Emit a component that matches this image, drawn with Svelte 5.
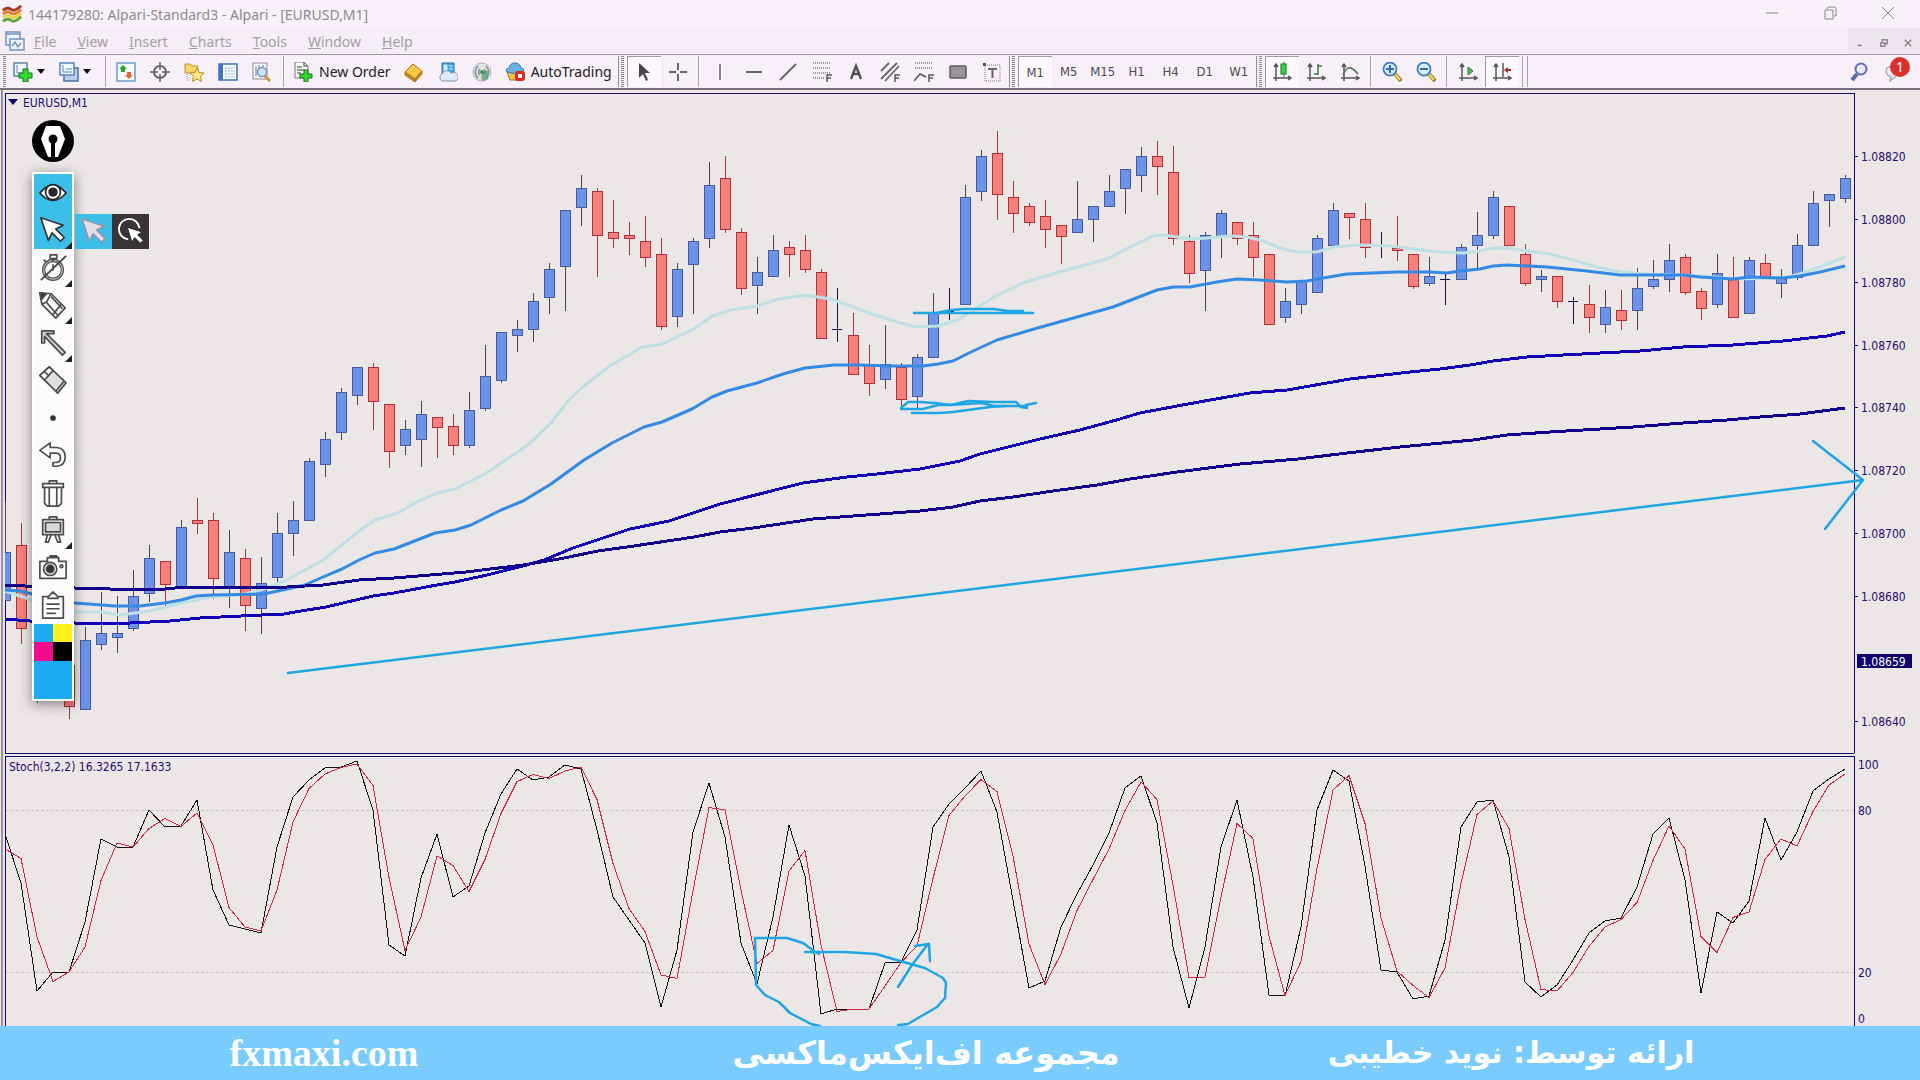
<script>
    const menus = ['File', 'View', 'Insert', 'Charts', 'Tools', 'Window', 'Help'];
    const mainTools = ['market', 'target', 'folder', 'navigator', 'tester'];
    const lineTools = ['vline', 'hline', 'trend', 'fibo', 'label', 'channel', 'fan', 'rect', 'textbox'];
    const frames = ['M1', 'M5', 'M15', 'H1', 'H4', 'D1', 'W1'];
    const penTools = ['eye', 'pointer', 'timer', 'pencil', 'line', 'eraser', 'dot', 'undo', 'trash', 'board', 'camera', 'clipboard'];
    const withMenu = ['pointer', 'timer', 'pencil', 'line', 'board'];

    // distance between bars and the first bar
    const STEP = 16;
    const FIRST = 5;
    const barX = (i) => FIRST + i * STEP;

    // bars: type (u - up, d - down, n - doji), high, body top, body bottom, low
    const bars = `
        u 501 552 600 600|d 523 545 628 644|u 640 660 700 703|d 650 670 690 700|d 660 665 706 719|u 627 640 709 709
        u 592 633 644 650|u 596 633 637 653|u 570 596 628 631|u 545 558 593 602|d 561 561 584 606|u 520 527 587 587
        d 498 520 523 534|d 513 520 578 599|u 530 552 588 608|d 549 558 605 631|u 557 583 608 634|u 513 533 577 583
        u 501 520 533 556|u 458 461 520 520|u 432 439 464 477|u 388 392 432 440|u 367 367 395 405|d 363 367 401 430
        d 404 404 451 468|u 420 429 445 455|u 401 414 439 467|d 417 417 427 458|d 414 426 445 455|u 392 410 445 448
        u 345 376 408 411|u 332 332 380 383|u 320 329 335 352|u 293 301 329 342|u 263 269 297 314|u 210 210 266 311
        u 175 188 207 226|d 188 191 235 277|d 200 232 238 248|d 222 235 238 255|d 216 241 257 267|d 238 254 326 330
        u 263 269 316 327|u 238 241 264 314|u 162 185 238 248|d 156 178 229 233|d 228 232 288 295|u 257 272 285 314
        u 235 250 276 276|d 241 247 254 277|d 235 250 269 273|d 269 272 338 338|n 288 329 329 342|d 313 335 374 374
        d 345 364 383 396|u 325 364 379 389|d 363 367 399 409|u 354 357 396 408|u 293 313 357 357|n 288 311 311 320
        u 185 197 304 304|u 150 156 191 201|d 131 153 194 220|d 181 197 213 233|d 203 206 222 226|d 200 216 229 248
        d 225 225 236 264|u 181 219 232 232|u 206 206 219 242|u 175 191 206 206|u 169 169 188 214|u 147 156 175 192
        d 141 156 166 195|d 146 172 238 245|d 235 241 273 283|u 232 235 270 311|u 210 213 236 258|d 222 222 238 245
        d 222 235 257 277|d 254 254 324 324|u 288 301 317 323|u 280 280 304 314|u 235 238 292 292|u 203 210 245 245
        d 213 213 217 239|d 203 219 247 258|n 232 245 245 258|d 216 248 250 261|d 254 254 286 289|u 257 276 283 286
        n 273 279 279 305|u 244 247 279 279|u 212 235 245 268|u 191 197 235 239|d 206 206 245 246|d 244 254 283 286
        u 270 276 279 292|d 276 276 301 308|n 297 301 301 324|d 285 304 317 333|u 290 307 324 333|d 290 310 320 330
        u 268 288 310 330|u 260 279 286 289|u 244 260 279 292|d 254 257 292 295|d 288 291 308 320|u 254 273 304 308
        d 257 280 317 317|u 257 260 313 313|d 254 263 277 277|u 269 279 283 298|u 234 245 277 280|u 191 203 245 245
        u 194 194 200 227|u 175 178 198 203`
        .trim()
        .split(/[|\n]/)
        .map((row, i) => {
            const [type, ...nums] = row.trim().split(' ');
            const [high, top, bottom, low] = nums.map(Number);
            return { type, high, top, bottom, low, x: barX(i) };
        });

    // moving averages, fast to slow
    const averages = [
        { cls: 'ma-fast', points: '5,591 32,600 75,612 101,612 120,615 150,611 181,603 212,597 245,594 264,589 287,580 323,560 342,545 359,531 375,520 398,513 417,502 437,493 455,489 485,474 507,459 528,445 551,423 569,400 584,386 610,366 642,347 662,344 694,329 712,316 731,310 757,306 779,299 805,295 831,299 853,307 875,315 901,323 916,327 938,326 957,320 971,312 994,297 1023,283 1056,273 1107,259 1130,247 1153,236 1163,235 1177,237 1190,239 1207,238 1230,236 1247,237 1263,241 1280,248 1297,252 1317,252 1333,247 1360,245 1390,246 1413,249 1440,252 1463,253 1480,251 1493,248 1510,248 1527,251 1550,254 1573,260 1597,267 1620,272 1647,274 1683,275 1713,277 1733,279 1783,278 1800,274 1820,267 1845,257' },
        { cls: 'ma-mid', points: '5,590 20,591 32,594 75,603 115,606 140,606 165,603 181,600 196,596 212,595 264,594 287,589 305,585 323,577 342,569 359,560 375,553 394,549 435,533 455,530 471,525 501,510 523,501 551,484 584,460 612,443 644,427 662,422 692,409 712,397 727,391 757,383 783,374 805,368 834,365 860,365 890,366 923,366 938,364 953,361 971,352 997,340 1034,329 1077,317 1113,307 1157,290 1173,287 1190,287 1217,282 1237,279 1260,280 1287,282 1307,281 1323,278 1347,274 1397,272 1430,272 1447,273 1460,271 1480,269 1493,266 1507,265 1547,267 1587,271 1620,275 1683,275 1700,277 1733,279 1750,277 1783,278 1800,276 1820,272 1845,266' },
        { cls: 'ma-slow', points: '5,619 30,621 75,623 130,623 170,621 200,618 262,615 284,614 301,611 326,607 373,596 394,593 437,585 455,582 487,575 523,566 544,560 573,548 630,529 669,521 720,504 803,483 847,477 877,474 920,469 960,461 980,454 1040,439 1080,430 1120,419 1140,413 1177,406 1210,400 1250,393 1287,390 1350,379 1410,372 1440,369 1470,365 1493,361 1527,357 1600,353 1640,351 1683,347 1733,345 1783,341 1827,336 1845,332' },
        { cls: 'ma-base', points: '5,585 25,586 75,588 110,589 165,589 185,587 287,587 323,585 359,580 394,578 466,572 523,565 559,559 598,551 634,546 694,537 720,532 753,528 813,519 853,516 920,511 953,507 980,501 1013,497 1053,491 1097,485 1130,479 1177,472 1240,464 1298,459 1347,453 1400,447 1473,440 1507,435 1550,432 1633,427 1683,423 1727,420 1760,417 1800,414 1845,408' },
    ];

    // stochastic %K, y on the canvas
    const fastLine = [
        834, 883, 991, 972, 972, 922, 839, 847, 847, 810, 827, 826, 800, 890, 925, 929, 933, 847, 797, 780,
        768, 767, 761, 810, 945, 956, 878, 834, 897, 886, 833, 794, 769, 780, 777, 765, 769, 830, 897, 920,
        943, 1007, 950, 832, 783, 837, 943, 984, 917, 825, 876, 1014, 1009, 1009, 1009, 963, 962, 930, 827, 804,
        788, 771, 812, 900, 988, 981, 927, 894, 865, 833, 788, 776, 823, 947, 1008, 947, 847, 800, 877, 995,
        996, 927, 810, 770, 781, 866, 970, 972, 999, 996, 940, 827, 802, 800, 857, 982, 997, 985, 960, 933,
        921, 918, 887, 834, 818, 880, 993, 912, 923, 901, 818, 860, 832, 791, 779, 769,
    ];
    // %D is the mean of the last two %K values
    const slowLine = fastLine.map((y, i) => (i ? (y + fastLine[i - 1]) / 2 : 849));
    const toPoints = (line) => line.map((y, i) => `${barX(i)},${y}`).join(' ');

    const prices = [
        ['1.08820', 156], ['1.08800', 219], ['1.08780', 282], ['1.08760', 345], ['1.08740', 407],
        ['1.08720', 470], ['1.08700', 533], ['1.08680', 596], ['1.08640', 721],
    ];
    const levels = [['100', 764], ['80', 810], ['20', 972], ['0', 1018]];

    // hand drawn marks
    const strokes = [
        'M288 673L1863 480M1813 441L1863 480L1825 529',
        'M914 313H1033M936 313L951 310L964 309L994 309L1008 311H1023',
        'M901 408L908 402H920L934 403L951 405L968 401L994 402H1016L1021 407L1027 408L1026 405L1036 403',
        'M901 409H923L938 405L949 405L982 403L994 406H1026',
        'M912 413H940L953 412L990 407L1005 406',
        'M819 954L814 951L803 943L787 938H755L756 985L765 995L779 1002L790 1013L811 1024L820 1026',
        'M805 952H845L876 954L900 961L925 968L943 978L946 983L945 998L937 1007L918 1018L908 1024L898 1025',
        'M898 987L912 965L928 944M915 946L929 944L930 961',
    ];
</script>

{#snippet axes()}
    <path d="M4 3v16M1 16h18M2 5l2-3 2 3M16 14l3 2-3 2" fill="none" stroke="#555" stroke-width="1.500" />
{/snippet}

{#snippet icon(name)}
    <svg class="icon" viewBox="0 0 20 20" aria-hidden="true">
        {#if name === 'newchart'}
            <rect x="1" y="1" width="13" height="13" fill="#eef6ff" stroke="#5d84a8" stroke-width="1.5" />
            <path d="M4 3v8h8" fill="none" stroke="#6b8cae" />
            <path d="M10 7h5v4h4v5h-4v4h-5v-4H6v-5h4z" fill="#35d52f" stroke="#13771a" />
        {:else if name === 'profiles'}
            <path d="M5 13v6h14V6h-4" fill="#b9cdec" stroke="#496fa5" stroke-width="1.5" />
            <rect x="1" y="1" width="14" height="12" fill="#f1f7ff" stroke="#5a85bd" stroke-width="1.5" />
            <path d="M4 3v7h9M7 7h6" fill="none" stroke="#5a85bd" />
        {:else if name === 'market'}
            <rect x="1" y="1" width="18" height="18" fill="#f5fbff" stroke="#6a9ccc" stroke-width="1.5" />
            <path d="M7 3l4 4H9v3H5V7H3z" fill="#2fa52f" />
            <path d="M13 17l-4-4h2v-3h4v3h2z" fill="#e2683c" />
        {:else if name === 'target'}
            <circle cx="10" cy="10" r="6" fill="none" stroke="#666" stroke-width="2" />
            <path d="M10 0v8M10 12v8M0 10h8M12 10h8" stroke="#666" stroke-width="1.5" />
        {:else if name === 'folder'}
            <path d="M1 2h5l2 2h6v7H1z" fill="#f6d76c" stroke="#bb9635" />
            <path d="M3 12v6h4" fill="none" stroke="#888" stroke-dasharray="1 1" />
            <path d="M13 6l2 4.500 5 .5-3.500 3.500 1 5-4.500-2.500-4.500 2.500 1-5L6 11l5-.5z" fill="#ffe680" stroke="#b78a26" />
        {:else if name === 'navigator'}
            <rect x="1" y="2" width="18" height="16" fill="#fff" stroke="#3c72b9" stroke-width="1.500" />
            <path d="M1 2h4v16H1z" fill="#4377c1" />
            <path d="M7 6h10M7 9h10M7 12h10M7 15h10" stroke="#8eabd4" stroke-dasharray="2 1" />
        {:else if name === 'tester'}
            <rect x="1" y="1" width="14" height="16" fill="#f7f7fb" stroke="#8a8a99" />
            <path d="M4 4v10M7 3v6M11 3v5" stroke="#5d7fa0" />
            <path d="M13 14l5 5" stroke="#c9a13b" stroke-width="3" />
            <circle cx="10" cy="10" r="4.500" fill="#cfe6fa" stroke="#7793ad" stroke-width="1.500" />
        {:else if name === 'order'}
            <path d="M2 0h9l4 4v12H2z" fill="#f8f8f8" stroke="#777" />
            <path d="M11 0v4h4M4 5h5M4 8h8M4 11h4" fill="none" stroke="#777" stroke-width="1.500" />
            <path d="M11 8h4v4h4v4h-4v4h-4v-4H7v-4h4z" fill="#35d52f" stroke="#13771a" />
        {:else if name === 'gold'}
            <path d="M1 10L9 2l9 7-7 8z" fill="#f4c64a" stroke="#a97416" />
            <path d="M1 10l10 7v3L1 13zM11 17l7-8v3l-7 8z" fill="#c58b20" stroke="#a97416" />
        {:else if name === 'cloud'}
            <path d="M4 1h12v12H4z" fill="#3fa6e2" stroke="#2774b1" />
            <path d="M6 3h3v8H6zM11 4h4M11 7h4" fill="#c9ecff" stroke="#c9ecff" />
            <path d="M4 19a4 4 0 0 1 0-7 5 5 0 0 1 9-1 4 4 0 0 1 5 8z" fill="#dfe9f5" stroke="#7c92b2" />
        {:else if name === 'radio'}
            <circle cx="10" cy="10" r="9" fill="#e0e3e2" stroke="#acb2b1" />
            <path d="M6 4a8 8 0 0 0 0 12M14 4a8 8 0 0 1 0 12M8 7a4 4 0 0 0 0 6M12 7a4 4 0 0 1 0 6" fill="none" stroke="#7c8b88" stroke-width="1.500" />
            <path d="M10 9v3a6 6 0 0 0 1 7l5-2V9z" fill="#4d9d69" opacity=".7" />
            <circle cx="10" cy="10" r="2" fill="#3b9357" />
        {:else if name === 'auto'}
            <path d="M2 10h15l-3 8H5z" fill="#edc04a" stroke="#a27722" />
            <path d="M1 9q0-3 3-3 1-5 6-5t6 5q3 0 3 3-9 5-18 0z" fill="#68b1e3" stroke="#3a7bad" />
            <rect x="10" y="9" width="10" height="10" rx="3" fill="#e02a1d" />
            <rect x="13" y="12" width="4" height="4" fill="#fff" />
        {:else if name === 'cursor'}
            <path d="M5 1v15l4-4 3 7 2-1-3-7h5z" fill="#484448" />
        {:else if name === 'cross'}
            <path d="M10 1v7M10 12v7M1 10h7M12 10h7" stroke="#666" stroke-width="2" />
        {:else if name === 'vline'}
            <path d="M10 2v16" stroke="#666" stroke-width="1.500" />
        {:else if name === 'hline'}
            <path d="M2 10h16" stroke="#666" stroke-width="2" />
        {:else if name === 'trend'}
            <path d="M2 18L18 2" stroke="#666" stroke-width="2" />
        {:else if name === 'fibo'}
            <path d="M1 1h18M1 6h18M1 11h18M1 16h11" stroke="#777" stroke-width="1.500" stroke-dasharray="1 1" />
            <path d="M15 20v-7h5M15 16h4" fill="none" stroke="#555" stroke-width="1.500" />
        {:else if name === 'label'}
            <path d="M5 17l5-13 5 13M7 12h6" fill="none" stroke="#555" stroke-width="2.500" />
        {:else if name === 'channel'}
            <path d="M1 9l8-8M1 17L17 1M5 19L19 4" stroke="#666" stroke-width="1.800" />
            <path d="M15 20v-7h5M15 16h4" fill="none" stroke="#555" stroke-width="1.500" />
        {:else if name === 'fan'}
            <path d="M1 1h18M1 6h18" stroke="#777" stroke-width="1.500" stroke-dasharray="1 1" />
            <path d="M0 19l6-7 6 3M15 20v-7h5M15 16h4" fill="none" stroke="#555" stroke-width="1.500" />
        {:else if name === 'rect'}
            <rect x="2" y="4" width="16" height="12" rx="1" fill="#999498" stroke="#5d595d" stroke-width="1.500" />
        {:else if name === 'textbox'}
            <rect x="3" y="3" width="15" height="16" fill="none" stroke="#777" stroke-dasharray="1 1" />
            <path d="M1 1h3v3H1z" fill="#555" />
            <path d="M6 7h9M10.500 7v9" stroke="#666" stroke-width="2" />
        {:else if name === 'candles'}
            {@render axes()}
            <path d="M12 0v15" stroke="#147a1d" />
            <rect x="9" y="2" width="5" height="10" fill="#35d548" stroke="#147a1d" />
        {:else if name === 'barchart'}
            {@render axes()}
            <path d="M12 2v11M12 4h4M8 12h4" stroke="#3b7a41" stroke-width="1.500" />
        {:else if name === 'linechart'}
            {@render axes()}
            <path d="M3 13q4-9 8-7t7 6" fill="none" stroke="#557058" stroke-width="1.500" />
        {:else if name === 'zoomin' || name === 'zoomout'}
            <path d="M13 12l6 7" stroke="#8d7420" stroke-width="4" />
            <path d="M13 12l5 6" stroke="#f2d65c" stroke-width="2.500" />
            <circle cx="8" cy="7" r="6.500" fill="#d8eeff" stroke="#447bc5" stroke-width="1.800" />
            <path d={name === 'zoomin' ? 'M4 7h8M8 3v8' : 'M4 7h8'} stroke="#336cae" stroke-width="2" />
        {:else if name === 'scroll'}
            {@render axes()}
            <path d="M10 5l5 4-5 4z" fill="#45bc57" stroke="#2a7b38" />
        {:else if name === 'shift'}
            {@render axes()}
            <path d="M11 1v14" stroke="#555" stroke-width="1.500" />
            <path d="M12 8l4-3v2h3v2h-3v2z" fill="#ae2727" />
        {:else if name === 'search'}
            <path d="M7 12l-5 6" stroke="#5c6ba8" stroke-width="4" />
            <circle cx="11" cy="7" r="5.500" fill="#e8ebfa" stroke="#6070b4" stroke-width="2" />
        {:else if name === 'chat'}
            <path d="M3 6a6 6 0 1 1 8 9l-5 4 1-4a6 6 0 0 1-4-9z" fill="#f0edf1" stroke="#b1abb4" stroke-width="1.500" />
        {/if}
    </svg>
{/snippet}

{#snippet pen(name)}
    <svg class="pen-icon" viewBox="0 0 32 32" aria-hidden="true" fill="none" stroke="#4e4b4f" stroke-width="1.800" stroke-linejoin="round">
        {#if name === 'eye'}
            <path d="M2 16q14-17 28 0-14 16-28 0z" fill="#fff" stroke="#28282c" />
            <circle cx="16" cy="15" r="8" fill="#fff" stroke="#28282c" />
            <circle cx="16" cy="15" r="5" fill="#28282c" stroke="none" />
        {:else if name === 'pointer'}
            <path d="M3 3l8 24 4-8 9 9 4-4-9-9 8-4z" fill="#fff" stroke="#333" />
        {:else if name === 'ghost'}
            <path d="M3 3l8 24 4-8 9 9 4-4-9-9 8-4z" fill="#e0dce8" stroke="#8d97a8" />
        {:else if name === 'lasso'}
            <path d="M25 13A11 11 0 1 0 13 25" stroke="#fff" stroke-width="2" />
            <path d="M12 12l5 16 3-5 6 6 3-3-6-6 5-3z" fill="#fff" stroke="#222" stroke-width="1" />
        {:else if name === 'timer'}
            <circle cx="16" cy="18" r="10" stroke-width="3.500" />
            <circle cx="16" cy="18" r="10" stroke="#ddd" stroke-width="1" />
            <path d="M13 2h7v4h-7zM16 6v3M6 7l3 3" />
            <path d="M3 29L30 3" stroke="#444" stroke-width="2" />
            <path d="M16 12v7" />
        {:else if name === 'pencil'}
            <path d="M2 3l12 1 15 15-10 11L4 15z" fill="#fff" />
            <path d="M2 3l7 1-5 6z" fill="#333" />
            <path d="M4 15l5-2 5-9M9 13l12 14M14 7l12 13M16 26l9-11" />
        {:else if name === 'line'}
            <path d="M4 16V3h13v3H9l20 20-3 3L7 9v7z" fill="#d8d5d9" />
        {:else if name === 'eraser'}
            <path d="M2 11L12 2l18 17-9 11z" fill="#e2e0e3" />
            <path d="M2 11L12 2l4 4-9 10z" fill="#fff" />
            <path d="M19 28l9-11M7 7l5 5" />
        {:else if name === 'dot'}
            <circle cx="16" cy="16" r="3" fill="#333" stroke="none" />
        {:else if name === 'undo'}
            <path d="M2 11l11-8v5h7q9 1 9 10t-9 10h-4v-4h3q5 0 5-5t-5-5h-6v5z" fill="#fff" />
        {:else if name === 'trash'}
            <path d="M7 10h18v17l-3 3H10l-3-3zM5 6h22v4H5zM12 3h8v3h-8zM12 11v18M20 11v18" fill="#fff" />
        {:else if name === 'board'}
            <path d="M5 5h22v16H5z" fill="#f4f2f4" />
            <path d="M8 8h16v10H8z" fill="#dcd9dd" />
            <path d="M12 5V2h8v3M10 21l-2 8h3l3-8M18 21l3 8h3l-2-8" />
        {:else if name === 'camera'}
            <path d="M2 9h8V5h12v4h8v18H2zM13 5V3h7v2" fill="#fff" />
            <circle cx="13" cy="17" r="7" />
            <circle cx="13" cy="17" r="4" fill="#333" />
            <circle cx="25" cy="14" r="1.500" />
        {:else if name === 'clipboard'}
            <path d="M5 7h6l5-5 5 5h6v23H5zM10 9h12M9 15h14M9 20h14M9 25h10" fill="#fff" />
        {/if}
    </svg>
{/snippet}

<div class="window">
    <header class="title">
        <svg class="logo" viewBox="0 0 20 24" aria-hidden="true" fill="none" stroke-width="3">
            <path d="M0 8q5-4 9-1t11-4" stroke="#a63a2b" />
            <path d="M0 12q5-4 9-1t11-4" stroke="#de7a2d" />
            <path d="M0 16q5-4 9-1t11-4" stroke="#e1d540" />
            <path d="M0 20q5-4 9-1t11-4" stroke="#5fa43c" />
        </svg>
        <h1>144179280: Alpari-Standard3 - Alpari - [EURUSD,M1]</h1>
        <div class="win-buttons">
            <button aria-label="Minimize"><svg viewBox="0 0 14 14"><path d="M1 7h12" /></svg></button>
            <button aria-label="Restore"><svg viewBox="0 0 14 14"><path d="M2 4h8v9H2zM4 3l1-2h6q2 0 2 2v7h-2" /></svg></button>
            <button aria-label="Close"><svg viewBox="0 0 14 14"><path d="M1 1l12 12M13 1L1 13" /></svg></button>
        </div>
    </header>

    <nav class="menu">
        <svg class="doc" viewBox="0 0 20 20" aria-hidden="true" fill="#edf4ff" stroke="#7693bb" stroke-width="1.500">
            <rect x="1" y="1" width="14" height="13" />
            <path d="M1 3h14" />
            <rect x="5" y="8" width="14" height="11" />
            <path d="M7 15l3-4 3 5 3-4" fill="none" />
        </svg>
        {#each menus as item}
            <button><u>{item[0]}</u>{item.slice(1)}</button>
        {/each}
        <div class="doc-buttons">
            <button aria-label="Minimize chart"><svg viewBox="0 0 10 10"><path d="M2 8h5" /></svg></button>
            <button aria-label="Restore chart"><svg viewBox="0 0 10 10"><path d="M1 5h5v4H1zM3 4V1h6v5H7" /></svg></button>
            <button aria-label="Close chart"><svg viewBox="0 0 10 10"><path d="M1 1l8 8M9 1L1 9" /></svg></button>
        </div>
    </nav>

    <div class="toolbar">
        <i class="grip"></i>
        {#each ['newchart', 'profiles'] as name}
            <button class="tool drop" aria-label={name}>{@render icon(name)}<b class="caret"></b></button>
        {/each}
        <i class="sep"></i>
        {#each mainTools as name}
            <button class="tool" aria-label={name}>{@render icon(name)}</button>
        {/each}
        <i class="sep"></i>
        <button class="tool wide">{@render icon('order')}New Order</button>
        {#each ['gold', 'cloud', 'radio'] as name}
            <button class="tool" aria-label={name}>{@render icon(name)}</button>
        {/each}
        <button class="tool wide">{@render icon('auto')}AutoTrading</button>
        <i class="grip split"></i>
        <button class="tool pressed" aria-label="cursor">{@render icon('cursor')}</button>
        <button class="tool" aria-label="crosshair">{@render icon('cross')}</button>
        <i class="sep"></i>
        {#each lineTools as name}
            <button class="tool" aria-label={name}>{@render icon(name)}</button>
        {/each}
        <i class="grip split"></i>
        {#each frames as frame, i}
            <button class="tool frame" class:pressed={i === 0}>{frame}</button>
        {/each}
        <i class="grip split"></i>
        <button class="tool pressed" aria-label="candles">{@render icon('candles')}</button>
        <button class="tool" aria-label="bars">{@render icon('barchart')}</button>
        <button class="tool" aria-label="line">{@render icon('linechart')}</button>
        <i class="sep"></i>
        <button class="tool" aria-label="zoom in">{@render icon('zoomin')}</button>
        <button class="tool" aria-label="zoom out">{@render icon('zoomout')}</button>
        <i class="sep"></i>
        <button class="tool" aria-label="auto scroll">{@render icon('scroll')}</button>
        <button class="tool pressed" aria-label="chart shift">{@render icon('shift')}</button>
        <i class="sep"></i>
        <i class="end"></i>
        <div class="right">
            <button class="tool" aria-label="search">{@render icon('search')}</button>
            <button class="tool chat" aria-label="messages">{@render icon('chat')}<span class="badge">1</span></button>
        </div>
    </div>

    <main class="chart">
        <svg class="canvas" viewBox="0 90 1920 936" preserveAspectRatio="none">
            <clipPath id="plot">
                <path d="M5 93H1855V1026H5z" />
            </clipPath>

            <!-- frame of both panes -->
            <g class="frame-lines">
                <path class="edge" d="M2 90V1026" />
                <path d="M5 93H1854M5 93V753H1854M5 1026V756H1854M1854 93V753M1854 756V1026" />
                {#each prices as [, y]}
                    <path d="M1854 {y}h4" />
                {/each}
            </g>
            <path class="level" d="M6 810H1854M6 972H1854" />

            <g clip-path="url(#plot)">
                {#each bars as bar}
                    <g class="bar {bar.type}">
                        <path d="M{bar.x} {bar.high}V{bar.low}" />
                        {#if bar.type === 'n'}
                            <path d="M{bar.x - 5} {bar.top}h10" />
                        {:else}
                            <rect x={bar.x - 5} y={bar.top} width="10" height={bar.bottom - bar.top} />
                        {/if}
                    </g>
                {/each}
            </g>

            {#each averages as ma}
                <polyline class="ma {ma.cls}" points={ma.points} />
            {/each}

            <polyline class="stoch k" points={toPoints(fastLine)} />
            <polyline class="stoch d" points={toPoints(slowLine)} />

            <path class="caption-mark" d="M8 99h10l-5 6z" />
            <text x="23" y="107">EURUSD,M1</text>
            <text x="9" y="771">Stoch(3,2,2) 16.3265 17.1633</text>
            {#each prices as [price, y]}
                <text x="1861" y={y + 5}>{price}</text>
            {/each}
            {#each levels as [level, y]}
                <text x="1858" y={y + 5}>{level}</text>
            {/each}
            <rect class="tag" x="1857" y="654" width="55" height="14" />
            <text class="tag-text" x="1861" y="666">1.08659</text>

            {#each strokes as d}
                <path class="ink" {d} />
            {/each}
        </svg>

        <!-- floating pen palette -->
        <aside class="palette">
            <button class="nib" aria-label="Pen">
                <svg viewBox="0 0 42 42">
                    <circle cx="21" cy="21" r="21" fill="#000" />
                    <path d="M14 6h14l5 13-7 18h-3V23h-4v14h-3L9 19z" fill="#fff" />
                    <circle cx="21" cy="19" r="4.500" fill="#000" />
                </svg>
            </button>
            <div class="strip">
                <div class="pens">
                    {#each penTools as name, i}
                        <div class="cell" class:active={i < 2}>
                            <button aria-label={name}>{@render pen(name)}</button>
                            {#if withMenu.includes(name)}<i class="more"></i>{/if}
                            {#if name === 'pointer'}
                                <div class="flyout">
                                    <button class="active" aria-label="arrow">{@render pen('ghost')}</button>
                                    <button class="dark" aria-label="lasso">{@render pen('lasso')}</button>
                                </div>
                            {/if}
                        </div>
                    {/each}
                </div>
                <div class="colors">
                    <button class="sky" aria-label="blue"></button>
                    <button class="yellow" aria-label="yellow"></button>
                    <button class="pink" aria-label="pink"></button>
                    <button class="black" aria-label="black"></button>
                    <button class="sky current" aria-label="current color"></button>
                </div>
            </div>
        </aside>
    </main>

    <footer>
        <a href="#site">fxmaxi.com</a>
        <span dir="rtl">مجموعه اف‌ایکس‌ماکسی</span>
        <span class="author" dir="rtl">ارائه توسط: نوید خطیبی</span>
    </footer>
</div>

<style>
    :global(body) {
        margin: 0;
    }

    .window {
        display: grid;
        grid-template-rows: 28px 26px 36px minmax(0, 1fr) 54px;
        height: 100vh;
        overflow: hidden;
        background: #f8f1fa;
        font-family: "Noto Sans", "Open Sans", sans-serif;
        font-size: 14px;
        color: #222;
    }

    button {
        padding: 0;
        border: 0;
        background: none;
        font: inherit;
        color: inherit;
    }

    /* title and menu */
    .title {
        display: flex;
        align-items: center;
        color: #8f8a93;
    }

    .logo {
        width: 20px;
        height: 22px;
        margin: 0 6px 0 2px;
    }

    h1 {
        flex: 1;
        margin: 0;
        font-size: 14px;
        font-weight: 400;
    }

    .win-buttons {
        display: flex;
        padding-right: 3px;
    }

    .win-buttons button {
        width: 58px;
    }

    .win-buttons svg {
        width: 14px;
        height: 14px;
        fill: none;
        stroke: #8c8790;
    }

    .menu {
        display: flex;
        align-items: center;
        background: #f5eef7;
        color: #a39ea7;
    }

    .doc {
        width: 20px;
        height: 20px;
        margin: 0 2px 0 5px;
    }

    .menu > button {
        margin-left: 7px;
        margin-right: 14px;
    }

    .doc-buttons {
        display: flex;
        align-self: stretch;
        margin-left: auto;
        background: #ebe5ed;
    }

    .doc-buttons button {
        width: 24px;
    }

    .doc-buttons svg {
        width: 8px;
        height: 8px;
        fill: none;
        stroke: #8c8790;
        stroke-width: 2;
    }

    /* toolbar */
    .toolbar {
        display: flex;
        box-sizing: border-box;
        border-top: 1px solid #a19ba4;
        border-bottom: 2px solid #77717b;
        padding: 1px 0;
        background: #f7f0f9;
    }

    .tool {
        display: flex;
        align-items: center;
        justify-content: center;
        flex: none;
        width: 34px;
        box-sizing: border-box;
    }

    .tool.drop {
        width: 46px;
        gap: 4px;
        padding-right: 6px;
    }

    .tool.wide {
        width: auto;
        gap: 6px;
        padding: 0 6px;
    }

    .tool.pressed {
        border-top: 1px solid #a09aa3;
        border-left: 1px solid #a09aa3;
        background: #fcf8fd;
    }

    .tool.frame {
        font-family: "DejaVu Sans Condensed", "DejaVu Sans", sans-serif;
        font-size: 13px;
        color: #4e4a50;
    }

    .icon {
        width: 20px;
        height: 20px;
    }

    .caret {
        border: 4px solid transparent;
        border-top: 5px solid #111;
        border-bottom: 0;
    }

    .sep {
        flex: none;
        width: 8px;
        background: linear-gradient(#aaa4ad, #aaa4ad) center / 1px 100% no-repeat;
    }

    .end {
        border-left: 1px solid #aaa4ad;
    }

    .grip {
        flex: none;
        box-sizing: border-box;
        width: 9px;
        background: repeating-linear-gradient(#8a858d 0 1px, transparent 1px 2px) center / 3px 100% no-repeat;
    }

    .grip.split {
        border-left: 1px solid #8f8a93;
    }

    .right {
        display: flex;
        margin-left: auto;
        padding-right: 9px;
    }

    .chat {
        position: relative;
    }

    .badge {
        position: absolute;
        top: 1px;
        right: 1px;
        width: 20px;
        border-radius: 50%;
        background: #d9302c;
        color: #fff;
        font-size: 14px;
        line-height: 20px;
    }

    /* chart */
    .chart {
        position: relative;
        background: #ebe7e6;
    }

    .canvas {
        display: block;
        width: 100%;
        height: 100%;
    }

    .canvas text {
        font-family: "DejaVu Sans Condensed", "DejaVu Sans", sans-serif;
        font-size: 12px;
        fill: #1c0e6e;
    }

    .frame-lines path {
        fill: none;
        stroke: #13086b;
        stroke-width: 1;
        shape-rendering: crispEdges;
    }

    .frame-lines .edge {
        stroke: #98929f;
        stroke-width: 2;
    }

    .level {
        stroke: #cbc7c8;
        stroke-dasharray: 3 2;
        shape-rendering: crispEdges;
    }

    .bar {
        shape-rendering: crispEdges;
    }

    .u path {
        stroke: #47464f;
    }

    .u rect {
        fill: #6d92ea;
        stroke: #4a5b96;
    }

    .d path {
        stroke: #9d3a43;
    }

    .d rect {
        fill: #f77f7d;
        stroke: #b12f36;
    }

    .n path {
        stroke: #17134a;
    }

    .ma {
        fill: none;
        stroke-width: 3;
        stroke-linejoin: round;
    }

    .ma-fast {
        stroke: #bfe0e5;
    }

    .ma-mid {
        stroke: #348ae2;
    }

    .ma-slow {
        stroke: #1200b6;
        shape-rendering: crispEdges;
    }

    .ma-base {
        stroke: #10008c;
        shape-rendering: crispEdges;
    }

    .stoch {
        fill: none;
        shape-rendering: crispEdges;
    }

    .k {
        stroke: #111;
    }

    .d.stoch {
        stroke: #cf2545;
    }

    .caption-mark,
    .tag {
        fill: #10036c;
    }

    .canvas .tag-text {
        fill: #fff;
    }

    .ink {
        fill: none;
        stroke: #1fa6e2;
        stroke-width: 2.5;
        stroke-linecap: round;
        stroke-linejoin: round;
    }

    /* pen palette */
    .palette {
        position: absolute;
        left: 32px;
        top: 30px;
        width: 42px;
    }

    .nib {
        display: block;
        width: 42px;
        height: 42px;
        margin-bottom: 10px;
    }

    .strip {
        border: 2px solid #fff;
        background: #fdfafd;
        box-shadow: 0 3px 12px rgba(0, 0, 0, 0.45);
    }

    .pens {
        display: grid;
        grid-template-rows: repeat(12, 1fr);
        height: 450px;
    }

    .cell {
        position: relative;
        display: grid;
        place-items: center;
    }

    .active {
        background: #3bbfe8;
    }

    .cell button,
    .flyout {
        display: flex;
        align-items: center;
        justify-content: center;
    }

    .pen-icon {
        width: 30px;
        height: 30px;
    }

    .more {
        position: absolute;
        right: 0;
        bottom: 0;
        border-left: 7px solid transparent;
        border-bottom: 7px solid #222;
    }

    .flyout {
        position: absolute;
        left: 100%;
        top: 2px;
        bottom: 0;
        padding-left: 3px;
        align-items: stretch;
    }

    .flyout button {
        width: 37px;
    }

    .dark {
        background: #393436;
    }

    .colors {
        display: grid;
        grid-template-columns: 1fr 1fr;
        grid-template-rows: 18px 19px 38px;
    }

    .sky {
        background: #1caaf0;
    }

    .yellow {
        background: #fff01a;
    }

    .pink {
        background: #f20d8c;
    }

    .black {
        background: #000;
    }

    .current {
        grid-column: 1 / 3;
    }

    /* banner */
    footer {
        display: grid;
        grid-template-columns: 592fr 612fr 558fr;
        align-items: center;
        justify-items: center;
        padding: 0 130px 0 28px;
        background: #7accff;
        color: #fff;
        font-family: "DejaVu Sans", sans-serif;
        font-size: 32px;
        font-weight: 700;
        line-height: 54px;
        white-space: nowrap;
    }

    footer a {
        color: inherit;
        font-family: "Liberation Serif", serif;
        font-size: 38px;
        text-decoration: none;
    }

    .author {
        font-size: 30px;
    }
</style>
